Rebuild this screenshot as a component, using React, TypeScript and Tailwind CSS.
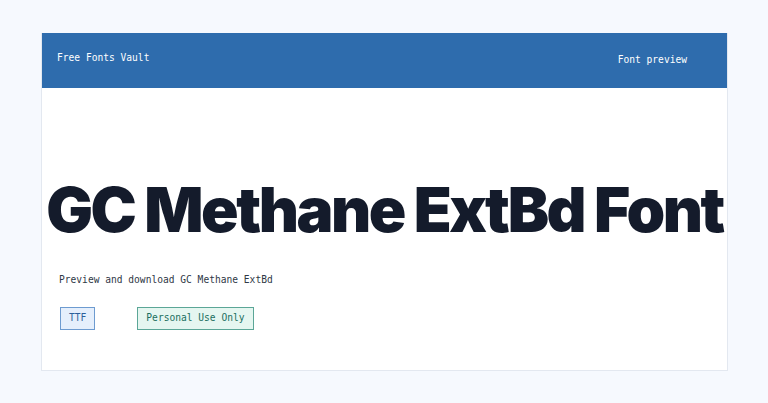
const mono = { fontFamily: '"DejaVu Sans Mono", "Liberation Mono", monospace' }

export default function App() {
  return (
    <div className="min-h-[403px] bg-[#f6f9fe] pt-[33px] pl-[41px]">
      <div className="w-[687px] h-[338px] bg-white border border-[#e3e8f0] border-t-0 flex flex-col">
        <header
          className="h-[55px] bg-[#2e6cad] flex items-center justify-between pl-[15px] pr-[40px] text-white text-[9.6px]"
          style={mono}
        >
          <span className="-mt-[5px]">Free Fonts Vault</span>
          <span>Font preview</span>
        </header>

        <div className="flex-1 flex flex-col">
          <h1
            className="mt-[91px] text-center text-[#141b2b] font-black text-[62px] leading-none tracking-[-2.5px] whitespace-nowrap"
            style={{ fontFamily: 'Inter, "Noto Sans", sans-serif' }}
          >
            GC Methane ExtBd Font
          </h1>

          <p className="mt-[32px] pl-[17px] text-[#2f3846] text-[9.6px] leading-[14px]" style={mono}>
            Preview and download GC Methane ExtBd
          </p>

          <div className="mt-[20px] pl-[18px] flex gap-[42px] text-[9.6px]" style={mono}>
            <span className="h-[23px] px-[8px] flex items-center bg-[#e5effc] border border-[#6d9bd0] text-[#2c5f9a]">
              TTF
            </span>
            <span className="h-[23px] px-[8px] flex items-center bg-[#e5f6f0] border border-[#5ba697] text-[#1b6f5e]">
              Personal Use Only
            </span>
          </div>
        </div>
      </div>
    </div>
  )
}
